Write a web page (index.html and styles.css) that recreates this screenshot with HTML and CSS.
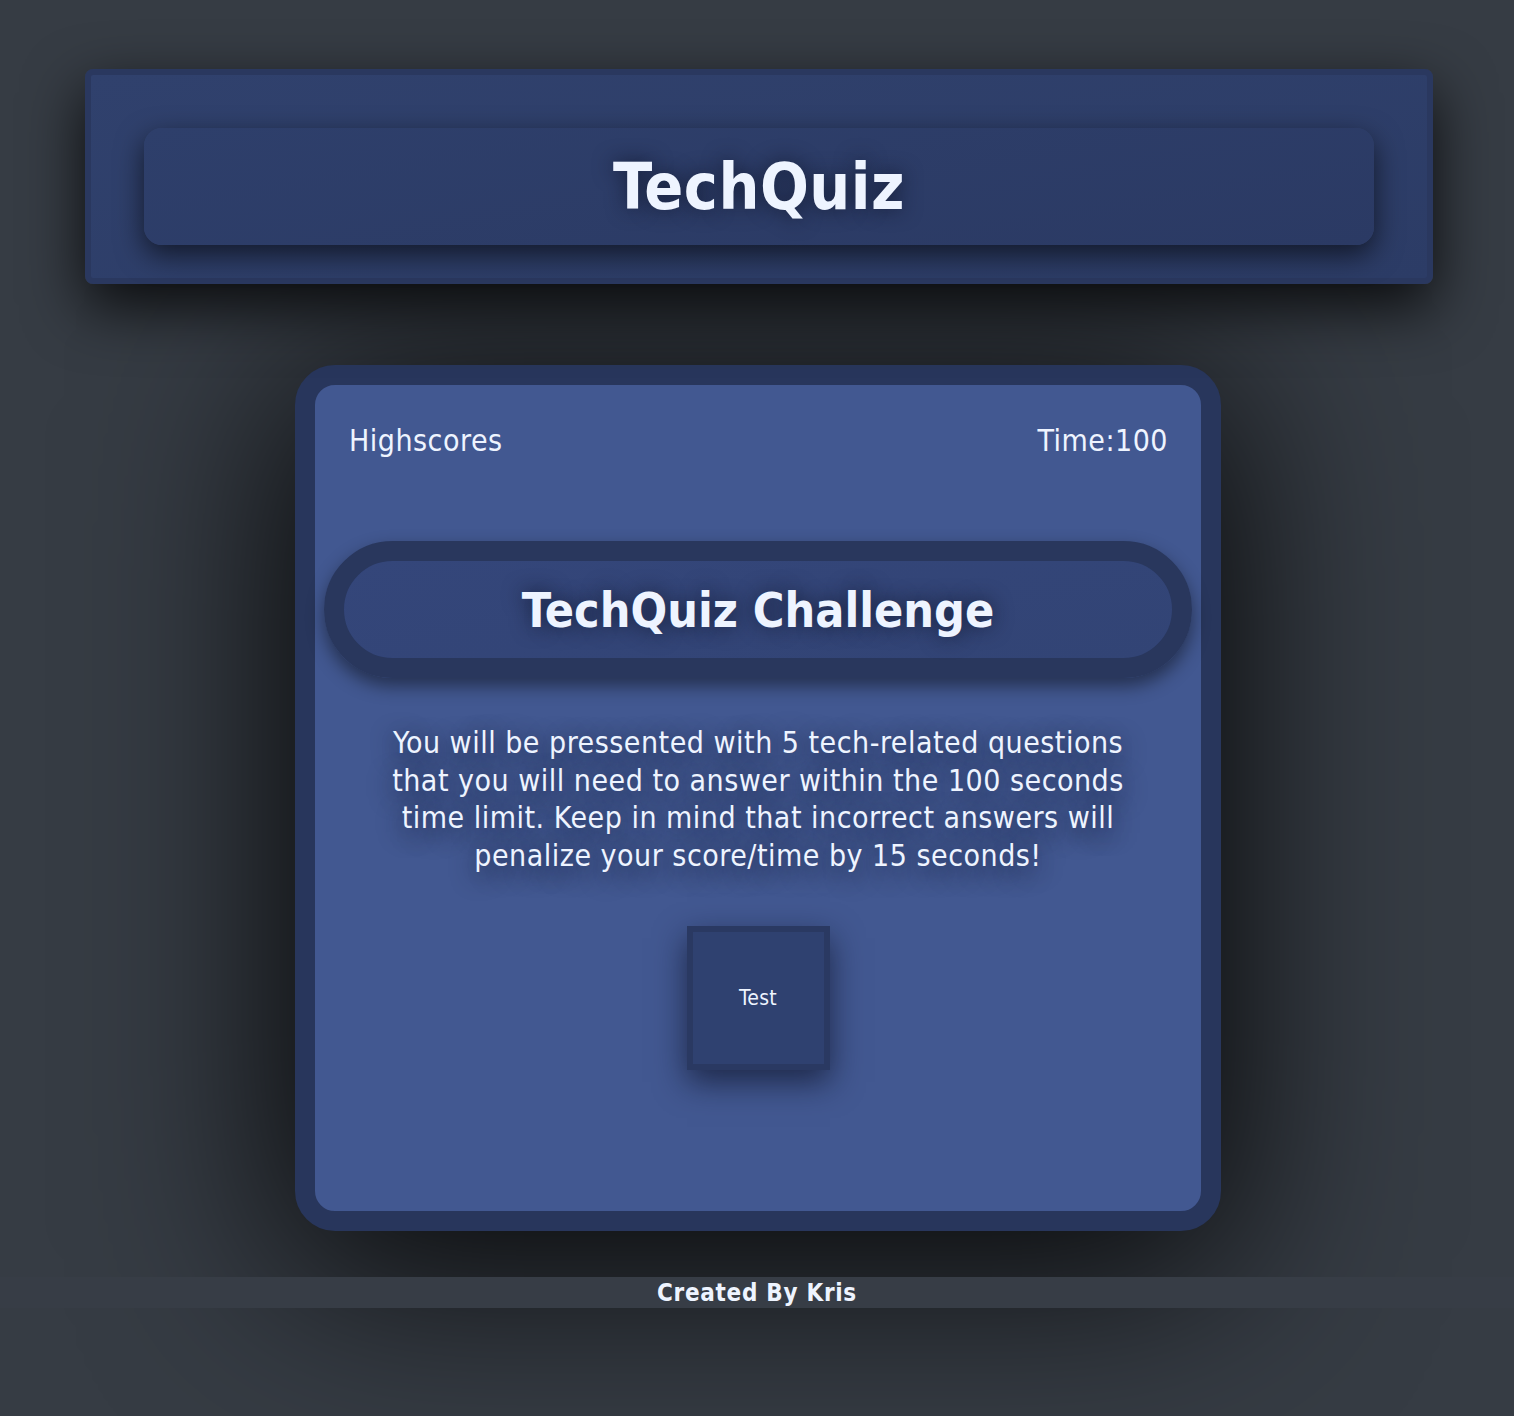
FILE: index.html
```html
<!DOCTYPE html>
<html lang="en">
<head>
<meta charset="utf-8">
<title>TechQuiz</title>
<link rel="stylesheet" href="styles.css">
</head>
<body>
<header class="site-header">
  <div class="title-box">
    <h1 class="site-title">TechQuiz</h1>
  </div>
</header>

<main class="quiz-card">
  <div class="quiz-inner">
    <div class="top-row">
      <span class="top-link">Highscores</span>
      <span class="top-timer">Time:100</span>
    </div>
    <div class="challenge-pill">
      <h2 class="challenge-title">TechQuiz Challenge</h2>
    </div>
    <p class="intro">You will be pressented with 5 tech-related questions that you will need to answer within the 100 seconds time limit. Keep in mind that incorrect answers will penalize your score/time by 15 seconds!</p>
    <div class="btn-row">
      <button class="start-btn">Test</button>
    </div>
  </div>
</main>

<footer class="site-footer">Created By Kris</footer>
</body>
</html>
```

FILE: styles.css
```css
html, body {
  margin: 0;
  padding: 0;
}

body {
  background: #363c44;
  color: #eef4ff;
  font-family: "DejaVu Sans", Verdana, sans-serif;
  font-stretch: condensed;
  min-height: 1416px;
  padding-top: 69px;
  box-sizing: border-box;
  overflow: hidden;
}

.site-header {
  position: relative;
  z-index: 2;
  margin: 0 81px 0 85px;
  border: 6px solid #2a385f;
  border-radius: 8px;
  background: linear-gradient(170deg, #30416d, #2c3c66);
  padding: 53px 53px 33px;
  box-shadow: 0 22px 60px rgba(0, 0, 0, 0.8);
}

.title-box {
  height: 117px;
  border-radius: 18px;
  background: linear-gradient(170deg, #2e3f6b, #2b3a64);
  box-shadow: 0 10px 28px rgba(0, 0, 0, 0.6);
  display: flex;
  align-items: center;
  justify-content: center;
}

.site-title {
  margin: 0;
  font-size: 64px;
  font-weight: bold;
  letter-spacing: 0.5px;
  text-shadow: 0 0 20px rgba(15, 20, 40, 0.75);
}

.quiz-card {
  position: relative;
  z-index: 1;
  width: 926px;
  box-sizing: border-box;
  margin: 81px auto 0;
  transform: translateX(1px);
  border: 20px solid #28365c;
  border-radius: 40px;
  background: #425891;
  box-shadow: 0 30px 200px 10px rgba(0, 0, 0, 0.9);
}

.quiz-inner {
  height: 826px;
  padding: 9px;
  box-sizing: border-box;
}

.top-row {
  display: flex;
  justify-content: space-between;
  padding: 29px 24px 0 25px;
  height: 147px;
  box-sizing: border-box;
  font-size: 30px;
  line-height: 36px;
  letter-spacing: 0.5px;
}

.challenge-pill {
  border: 20px solid #29375d;
  border-radius: 70px;
  height: 137px;
  box-sizing: border-box;
  background: linear-gradient(170deg, #34467a, #324475);
  box-shadow: 0 8px 18px rgba(0, 0, 0, 0.45);
  display: flex;
  align-items: center;
  justify-content: center;
}

.challenge-title {
  margin: 0;
  font-size: 48px;
  font-weight: bold;
  text-shadow: 0 0 20px rgba(15, 20, 40, 0.75);
}

.intro {
  width: 770px;
  margin: 46px auto 0;
  text-align: center;
  font-size: 30px;
  line-height: 37.5px;
  letter-spacing: 0.5px;
  text-shadow: 0 6px 24px rgba(10, 15, 35, 0.85);
}

.btn-row {
  display: flex;
  justify-content: center;
  margin-top: 52px;
}

.start-btn {
  width: 143px;
  height: 144px;
  border: 6px solid #2a3962;
  background: #2f4170;
  color: #eef4ff;
  font-family: inherit;
  font-stretch: condensed;
  font-size: 21px;
  letter-spacing: 0.3px;
  box-shadow: 0 12px 30px rgba(10, 15, 35, 0.65);
  cursor: pointer;
}

.site-footer {
  position: relative;
  z-index: 2;
  margin-top: 46px;
  background: #373d46;
  height: 31px;
  line-height: 33px;
  text-align: center;
  font-size: 24px;
  font-weight: bold;
  letter-spacing: 0.7px;
}
```
